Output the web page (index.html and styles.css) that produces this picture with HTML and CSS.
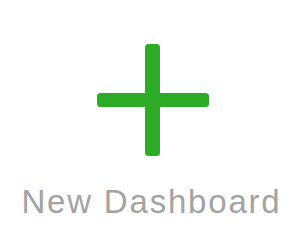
FILE: index.html
```html
<!DOCTYPE html>
<html>
<head>
<meta charset="utf-8">
<link rel="stylesheet" href="styles.css">
</head>
<body>
<div class="tile">
  <div class="plus">
    <svg width="112" height="112" viewBox="0 0 112 112">
      <rect x="48" y="0" width="15" height="112" rx="3.5" fill="#2eab26"/>
      <rect x="0" y="49" width="112" height="14" rx="3.5" fill="#2eab26"/>
    </svg>
  </div>
  <div class="label">New Dashboard</div>
</div>
</body>
</html>
```
FILE: styles.css
```css
html, body {
  margin: 0;
  padding: 0;
  background: #ffffff;
}
.tile {
  width: 300px;
  height: 245px;
  display: flex;
  flex-direction: column;
  align-items: center;
}
.plus {
  margin-top: 44px;
  margin-left: 6px;
  height: 112px;
}
.plus svg {
  display: block;
}
.label {
  margin-top: 28px;
  font-family: "Liberation Sans", Arial, sans-serif;
  font-size: 33px;
  line-height: 36px;
  letter-spacing: 1.8px;
  color: #a3a3a3;
  white-space: nowrap;
  margin-left: 3px;
}
```
